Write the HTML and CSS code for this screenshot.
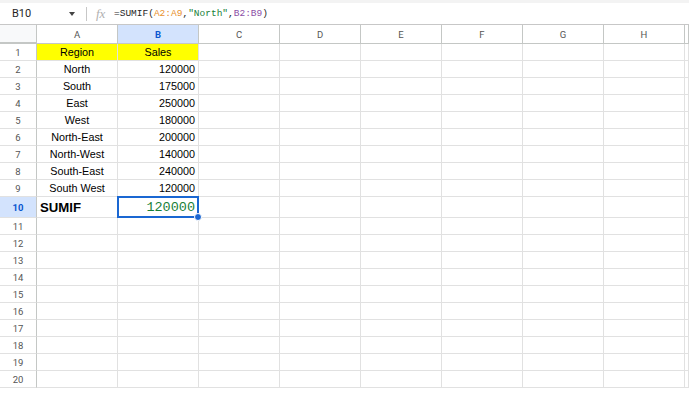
FILE: index.html
```html
<!DOCTYPE html>
<html lang="en">
<head>
    <meta charset="UTF-8">
    <meta name="viewport" content="width=device-width, initial-scale=1.0">
    <title>SUMIF</title>
    <link rel="stylesheet" href="styles.css">
</head>
<body>
    <!-- Formula Bar -->
    <div class="formula-bar">
        <div class="name-box">
            <span class="cell-ref">B10</span>
            <span class="caret"></span>
        </div>
        <span class="divider"></span>
        <span class="fx">fx</span>
        <span class="formula">=SUMIF(<span class="ref-a">A2:A9</span>,<span class="str">"North"</span>,<span class="ref-b">B2:B9</span>)</span>
    </div>

    <!-- Sheet Grid -->
    <div class="grid">
        <div class="corner"></div>
        <div class="ch">A</div><div class="ch active">B</div><div class="ch">C</div><div class="ch">D</div><div class="ch">E</div><div class="ch">F</div><div class="ch">G</div><div class="ch">H</div><div class="ch"></div>

        <div class="rh">1</div><div class="c mid head">Region</div><div class="c mid head">Sales</div><div></div><div></div><div></div><div></div><div></div><div></div><div></div>
        <div class="rh">2</div><div class="c mid">North</div><div class="c num">120000</div><div></div><div></div><div></div><div></div><div></div><div></div><div></div>
        <div class="rh">3</div><div class="c mid">South</div><div class="c num">175000</div><div></div><div></div><div></div><div></div><div></div><div></div><div></div>
        <div class="rh">4</div><div class="c mid">East</div><div class="c num">250000</div><div></div><div></div><div></div><div></div><div></div><div></div><div></div>
        <div class="rh">5</div><div class="c mid">West</div><div class="c num">180000</div><div></div><div></div><div></div><div></div><div></div><div></div><div></div>
        <div class="rh">6</div><div class="c mid">North-East</div><div class="c num">200000</div><div></div><div></div><div></div><div></div><div></div><div></div><div></div>
        <div class="rh">7</div><div class="c mid">North-West</div><div class="c num">140000</div><div></div><div></div><div></div><div></div><div></div><div></div><div></div>
        <div class="rh">8</div><div class="c mid">South-East</div><div class="c num">240000</div><div></div><div></div><div></div><div></div><div></div><div></div><div></div>
        <div class="rh">9</div><div class="c mid">South West</div><div class="c num">120000</div><div></div><div></div><div></div><div></div><div></div><div></div><div></div>
        <div class="rh active">10</div><div class="c label">SUMIF</div><div class="c result">120000<span class="selection"><span class="handle"></span></span></div><div></div><div></div><div></div><div></div><div></div><div></div><div></div>

        <div class="rh">11</div><div></div><div></div><div></div><div></div><div></div><div></div><div></div><div></div><div></div>
        <div class="rh">12</div><div></div><div></div><div></div><div></div><div></div><div></div><div></div><div></div><div></div>
        <div class="rh">13</div><div></div><div></div><div></div><div></div><div></div><div></div><div></div><div></div><div></div>
        <div class="rh">14</div><div></div><div></div><div></div><div></div><div></div><div></div><div></div><div></div><div></div>
        <div class="rh">15</div><div></div><div></div><div></div><div></div><div></div><div></div><div></div><div></div><div></div>
        <div class="rh">16</div><div></div><div></div><div></div><div></div><div></div><div></div><div></div><div></div><div></div>
        <div class="rh">17</div><div></div><div></div><div></div><div></div><div></div><div></div><div></div><div></div><div></div>
        <div class="rh">18</div><div></div><div></div><div></div><div></div><div></div><div></div><div></div><div></div><div></div>
        <div class="rh">19</div><div></div><div></div><div></div><div></div><div></div><div></div><div></div><div></div><div></div>
        <div class="rh">20</div><div></div><div></div><div></div><div></div><div></div><div></div><div></div><div></div><div></div>
    </div>
</body>
</html>
```

FILE: styles.css
```css
/* Sheet look */
body {
    margin: 0;
    background-color: #fff;
    font-family: "Liberation Sans", Arial, sans-serif;
    overflow: hidden;
    width: 689px;
    height: 393px;
}
.formula-bar {
    display: flex;
    align-items: center;
    height: 21px;
    border-top: 3px solid #f3f3f3;
    border-bottom: 1px solid #c7c7c7;
    box-sizing: content-box;
}
.name-box {
    display: flex;
    align-items: center;
    width: 78px;
    padding-left: 12px;
    box-sizing: border-box;
}
.cell-ref {
    font-family: Roboto, sans-serif;
    font-size: 11px;
    color: #1f1f1f;
    flex: 1;
}
.caret {
    width: 0;
    height: 0;
    border-left: 3.5px solid transparent;
    border-right: 3.5px solid transparent;
    border-top: 4px solid #444;
    margin-right: 3px;
}
.divider {
    width: 1px;
    height: 14px;
    background-color: #c7c7c7;
    margin-left: 8px;
    margin-right: 9px;
}
.fx {
    font-family: "Liberation Serif", serif;
    font-style: italic;
    font-size: 13px;
    color: #b0b0b0;
    width: 18px;
}
.formula {
    font-family: "Liberation Mono", monospace;
    font-size: 9.5px;
    color: #1f1f1f;
}
.ref-a {
    color: #e8912e;
}
.str {
    color: #188038;
}
.ref-b {
    color: #8b4ea6;
}
.grid {
    display: grid;
    grid-template-columns: 37px repeat(8, 81px) 4px;
    grid-template-rows: 19px repeat(9, 17px) 21px repeat(10, 17px) 6px;
}
.grid > div {
    border-right: 1px solid #e1e1e1;
    border-bottom: 1px solid #e1e1e1;
    box-sizing: border-box;
    display: flex;
    align-items: center;
    font-size: 10.8px;
    color: #000;
}
.grid > .corner {
    background-color: #f8f9fa;
    border-right: 1px solid #c4c7c5;
    border-bottom: 2px solid #c4c7c5;
}
.grid > .ch {
    justify-content: center;
    font-family: Roboto, sans-serif;
    font-size: 9.5px;
    color: #555;
    border-right-color: #c4c7c5;
    border-bottom-color: #c4c7c5;
}
.grid > .rh {
    justify-content: center;
    font-family: Roboto, sans-serif;
    font-size: 9.5px;
    color: #555;
    border-right-color: #c4c7c5;
}
.grid > .active {
    background-color: #d3e3fd;
    color: #0b57d0;
    font-weight: bold;
}
.grid > .mid {
    justify-content: center;
}
.grid > .head {
    background-color: #ffff00;
}
.grid > .num {
    justify-content: flex-end;
    padding-right: 3px;
}
.grid > .label {
    font-weight: bold;
    font-size: 13.2px;
    padding-left: 3px;
}
.grid > .result {
    position: relative;
    justify-content: flex-end;
    padding-right: 3px;
    font-family: "Liberation Mono", monospace;
    font-size: 13.5px;
    color: #188038;
}
.selection {
    position: absolute;
    left: -1px;
    top: -1px;
    right: -1px;
    bottom: -1px;
    border: 2px solid #1a67d2;
}
.handle {
    position: absolute;
    right: -5px;
    bottom: -5px;
    width: 6px;
    height: 6px;
    border-radius: 50%;
    background-color: #1a67d2;
    border: 1px solid #fff;
}
```
